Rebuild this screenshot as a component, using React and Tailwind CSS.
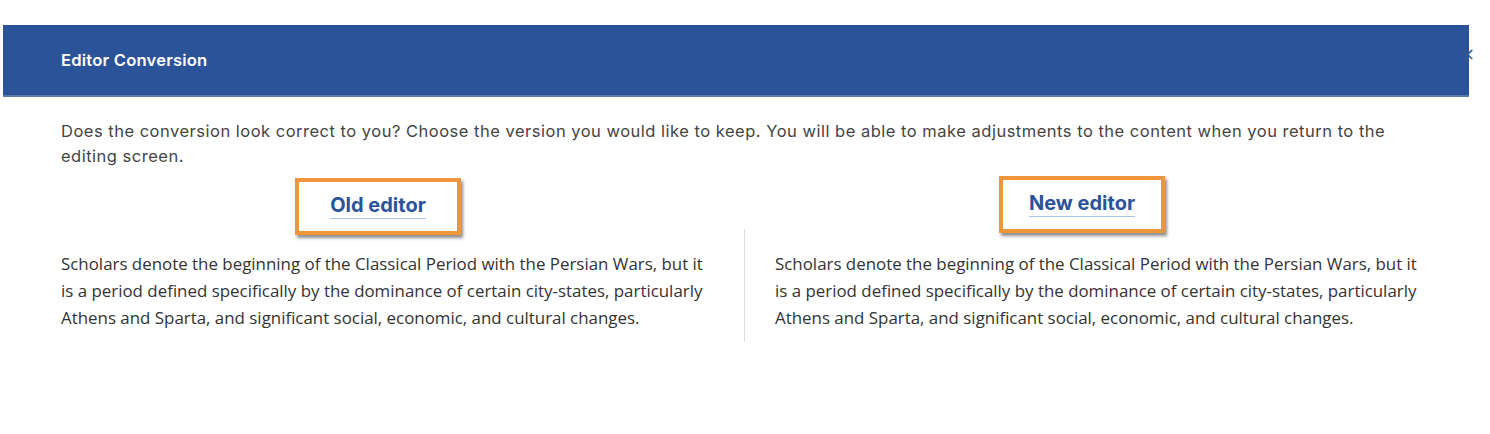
export default function App() {
  const para =
    'Scholars denote the beginning of the Classical Period with the Persian Wars, but it is a period defined specifically by the dominance of certain city-states, particularly Athens and Sparta, and significant social, economic, and cultural changes.';

  return (
    <div className="h-[434px] w-[1490px] overflow-hidden bg-white pt-[25px]">
      <div className="relative ml-[3px] flex h-[72px] w-[1466px] items-center border-b-2 border-[#5b79b0] bg-[#2b539a] pl-[58px]">
        <h1 className="text-[16.6px] font-semibold tracking-[0.2px] text-white [font-family:Inter,sans-serif]">Editor Conversion</h1>
        <span className="absolute right-[-6px] top-[20px] text-[18px] leading-none text-[#37578c] [font-family:'DejaVu_Sans',sans-serif]">×</span>
      </div>

      <p className="ml-[61px] mt-[22px] w-[1360px] text-[16.5px] leading-[25px] tracking-[0.5px] text-[#444] [font-family:Inter,sans-serif]">
        Does the conversion look correct to you? Choose the version you would like to keep. You will be able to make adjustments to the content when you return to the editing screen.
      </p>

      <div className="ml-[61px] flex">
        <div className="w-[683px]">
          <div className="flex w-[634px] justify-center pt-[9px]">
            <EditorButton label="Old editor" />
          </div>
          <p className="mt-[15px] w-[655px] text-[16.9px] leading-[27px] text-[#333] [font-family:'Open_Sans',sans-serif]">{para}</p>
        </div>
        <div className="mt-[60px] h-[113px] w-px bg-[#dcdcdc]" />
        <div className="w-[695px] pl-[30px]">
          <div className="flex w-[614px] justify-center pt-[7px]">
            <EditorButton label="New editor" />
          </div>
          <p className="mt-[17px] w-[655px] text-[16.9px] leading-[27px] text-[#333] [font-family:'Open_Sans',sans-serif]">{para}</p>
        </div>
      </div>
    </div>
  );
}

function EditorButton({ label }) {
  return (
    <div className="flex h-[57px] w-[166px] items-center justify-center border-4 border-[#f0953a] bg-white shadow-[2px_3px_3px_rgba(0,0,0,0.45)]">
      <span className="border-b border-[#a9c4ea] pb-[2px] text-[20px] font-bold leading-[21px] text-[#2b539a] [font-family:Inter,sans-serif]">
        {label}
      </span>
    </div>
  );
}
